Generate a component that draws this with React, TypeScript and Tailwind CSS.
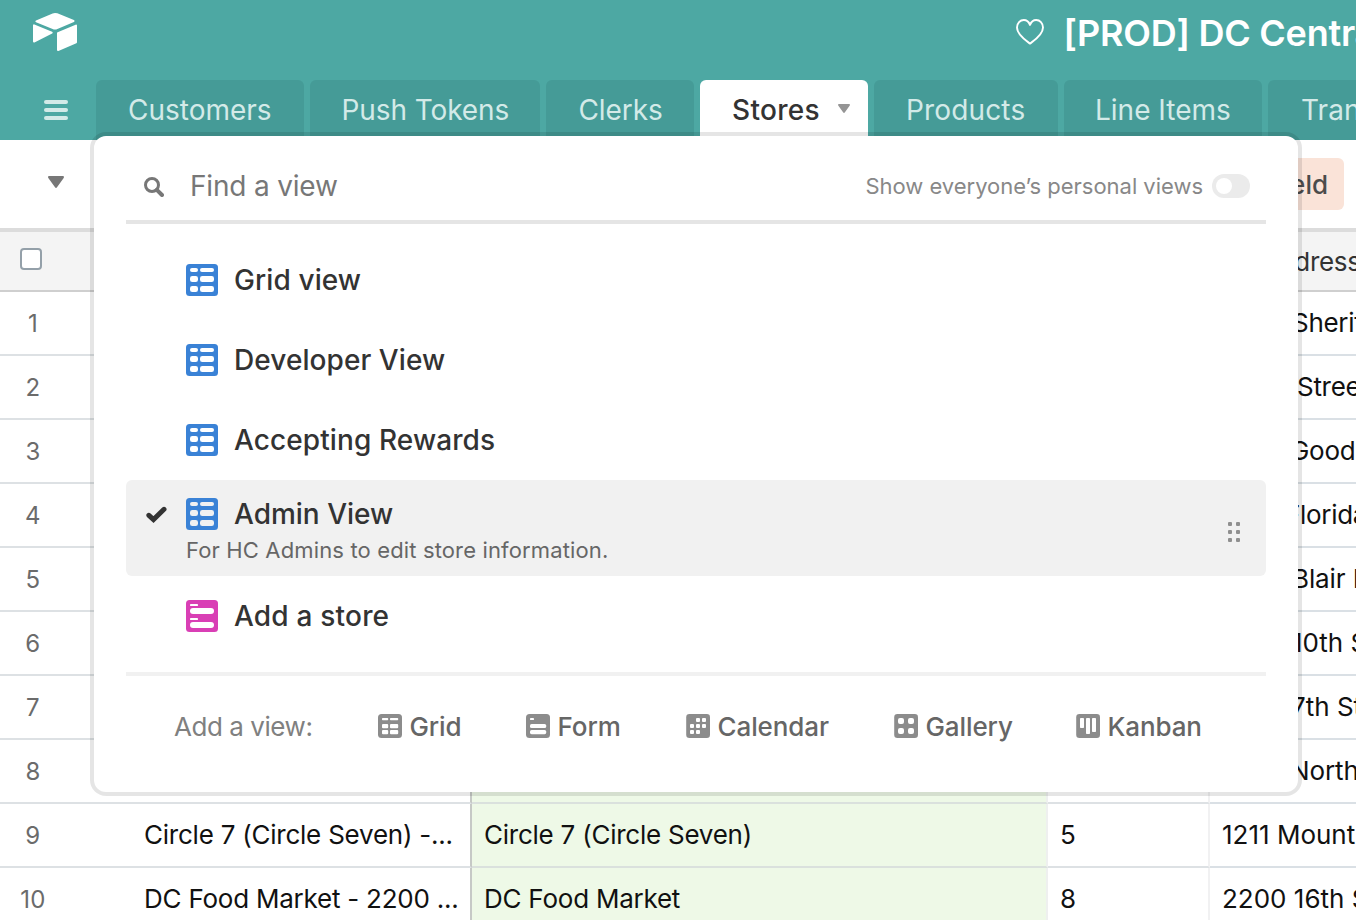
import React from "react";

type IconProps = { className?: string };

const GridIcon = ({ hole = "#fff" }: { hole?: string }) => (
  <svg width="32" height="32" viewBox="0 0 32 32" className="shrink-0">
    <rect width="32" height="32" rx="3.5" fill="#3a82d6" />
    <g fill={hole}>
      <rect x="4" y="4" width="8" height="4" rx="2" />
      <rect x="14" y="4" width="14" height="4" rx="2" />
      <rect x="4" y="12" width="8" height="6" rx="2.3" />
      <rect x="14" y="12" width="14" height="6" rx="2.3" />
      <rect x="4" y="22" width="8" height="6" rx="2.3" />
      <rect x="14" y="22" width="14" height="6" rx="2.3" />
    </g>
  </svg>
);

const FormIcon = () => (
  <svg width="32" height="32" viewBox="0 0 32 32" className="shrink-0">
    <rect width="32" height="32" rx="3.5" fill="#d93fb5" />
    <g fill="#fff">
      <rect x="4" y="4" width="8" height="2" rx="0.4" />
      <rect x="4" y="8" width="24" height="6" rx="3" />
      <rect x="4" y="18" width="8" height="2" rx="0.4" />
      <rect x="4" y="22" width="24" height="6" rx="3" />
    </g>
  </svg>
);

const SmallGrid = () => (
  <svg width="24" height="24" viewBox="0 0 24 24">
    <rect width="24" height="24" rx="3.5" fill="#8c8c8c" />
    <g fill="#fff">
      <rect x="4" y="4" width="6.2" height="2.2" rx="0.7" />
      <rect x="12" y="4" width="8.2" height="2.2" rx="0.7" />
      <rect x="4" y="10" width="6.2" height="4.2" rx="1" />
      <rect x="12" y="10" width="8.2" height="4.2" rx="1" />
      <rect x="4" y="16" width="6.2" height="4.2" rx="1" />
      <rect x="12" y="16" width="8.2" height="4.2" rx="1" />
    </g>
  </svg>
);

const SmallForm = () => (
  <svg width="24" height="24" viewBox="0 0 24 24">
    <rect width="24" height="24" rx="3.5" fill="#8c8c8c" />
    <g fill="#fff">
      <rect x="4" y="4" width="4" height="2" rx="0.4" />
      <rect x="4" y="10" width="16.2" height="4" rx="1.6" />
      <rect x="4" y="16" width="16.2" height="4.2" rx="1.6" />
    </g>
  </svg>
);

const SmallCalendar = () => (
  <svg width="24" height="24" viewBox="0 0 24 24">
    <rect x="0.2" width="23.8" height="24" rx="3.2" fill="#8c8c8c" />
    <g fill="#fff">
      <rect x="10" y="4" width="4" height="4" rx="1" />
      <rect x="16" y="4" width="4" height="4" rx="1" />
      <rect x="4" y="10" width="4" height="4" rx="1" />
      <rect x="10" y="10" width="4" height="4" rx="1" />
      <rect x="16" y="10" width="4" height="4" rx="1" />
      <rect x="4" y="16" width="4" height="4" rx="1" />
      <rect x="10" y="16" width="4" height="4" rx="1" />
    </g>
  </svg>
);

const SmallGallery = () => (
  <svg width="24" height="24" viewBox="0 0 24 24">
    <rect x="0.2" width="23.8" height="24" rx="3.2" fill="#8c8c8c" />
    <g fill="#fff">
      <rect x="4" y="4" width="6" height="6" rx="2" />
      <rect x="14" y="4" width="6" height="6" rx="2" />
      <rect x="4" y="14" width="6" height="6" rx="2" />
      <rect x="14" y="14" width="6" height="6" rx="2" />
    </g>
  </svg>
);

const SmallKanban = () => (
  <svg width="24" height="24" viewBox="0 0 24 24">
    <rect x="0.2" width="23.8" height="24" rx="3.2" fill="#8c8c8c" />
    <g fill="#fff">
      <rect x="4" y="4" width="4" height="10" rx="0.8" />
      <rect x="10" y="4" width="4" height="16" rx="0.8" />
      <rect x="16" y="4" width="4" height="14" rx="0.8" />
    </g>
  </svg>
);

const Caret = ({ className }: IconProps) => (
  <svg viewBox="0 0 16 12" className={className} fill="currentColor">
    <path d="M1.2 0h13.6c1 0 1.5 1 .9 1.9L9 11.3c-.5.8-1.5.8-2 0L.3 1.9C-.3 1 .2 0 1.2 0z" />
  </svg>
);

const tabs = [
  { name: "Customers", box: "w-[208px]", text: "tracking-[0px]" },
  { name: "Push Tokens", box: "w-[230px]", text: "ml-[-0.5px] tracking-[-0.1px]" },
  { name: "Clerks", box: "w-[148px]", text: "ml-[0.5px] tracking-[-0.1px]" },
  { name: "Stores", box: "w-[168px]", text: "tracking-[0.3px]", active: true },
  { name: "Products", box: "w-[184px]", text: "tracking-[0.15px]" },
  { name: "Line Items", box: "w-[198px]", text: "ml-[-1px] tracking-[0px]" },
  { name: "Transactions", box: "w-[230px]", text: "ml-[1px] tracking-[0.1px]" },
];

const rows = [
  { name: "", store: "", count: "", address: "Sheriff", pad: "pl-[82px] tracking-[-0.3px]" },
  { name: "", store: "", count: "", address: "Street", pad: "pl-[87px] tracking-[-0.3px]" },
  { name: "", store: "", count: "", address: "Good", pad: "pl-[80px] tracking-[-0.3px]" },
  { name: "", store: "", count: "", address: "Florida", pad: "pl-[75px] tracking-[-0.3px]" },
  { name: "", store: "", count: "", address: "Blair Rd", pad: "pl-[82px] tracking-[-0.1px]" },
  { name: "", store: "", count: "", address: "10th St", pad: "pl-[82px]" },
  { name: "", store: "", count: "", address: "7th St", pad: "pl-[81px]" },
  { name: "", store: "", count: "", address: "North", pad: "pl-[80px] tracking-[-0.1px]" },
  { name: "Circle 7 (Circle Seven) -...", store: "Circle 7 (Circle Seven)", count: "5", address: "1211 Mount", pad: "pl-3" },
  { name: "DC Food Market - 2200 ...", store: "DC Food Market", count: "8", address: "2200 16th St", pad: "pl-3" },
];

const views = [
  { name: "Grid view", text: "tracking-[0.1px]" },
  { name: "Developer View", text: "tracking-[0.07px]" },
  { name: "Accepting Rewards", text: "tracking-[0.1px]" },
];

const viewTypes = [
  { name: "Grid", Icon: SmallGrid, box: "w-[148px]" },
  { name: "Form", Icon: SmallForm, box: "w-[160px]" },
  { name: "Calendar", Icon: SmallCalendar, box: "w-[208px]" },
  { name: "Gallery", Icon: SmallGallery, box: "w-[182px]" },
  { name: "Kanban", Icon: SmallKanban, box: "w-[160px]" },
];

function Header() {
  return (
    <header className="flex h-[140px] flex-col bg-[#4da8a3]">
      <div className="flex h-20 items-start justify-between pl-8">
        <svg width="46" height="40" viewBox="0 0 46 40" className="mt-3" fill="#fff" stroke="#fff" strokeWidth="2" strokeLinejoin="round">
          <path d="M4.4 9.3 21 2.3Q23 1.5 25 2.3L41.5 9 25 16Q23 16.9 21 16z" />
          <path d="M2 13.3V29.5L19.7 20.6z" />
          <path d="M26 21.2V38L44 30.3V13.6z" />
        </svg>
        <div className="flex w-[340px] items-center overflow-hidden pt-[9px] whitespace-nowrap">
          <svg width="28" height="26" viewBox="0 0 28 26" className="mr-[19.5px] -mt-0.5 shrink-0" fill="none" stroke="#fff" strokeWidth="1.9" strokeLinejoin="round">
            <path d="M14 24.6C10 21.8 1 16 1 8.6 1 4 4.2 1 7.8 1 10.8 1 12.9 3 14 5.9 15.1 3 17.2 1 20.2 1 23.8 1 27 4 27 8.6 27 16 18 21.8 14 24.6z" />
          </svg>
          <h1 className="text-[36px] leading-[48px] font-semibold tracking-[-0.25px] text-white">[PROD] DC Central</h1>
        </div>
      </div>
      <nav className="flex h-[60px] overflow-hidden">
        <div className="flex w-24 shrink-0 items-center pl-11">
          <div className="flex flex-col gap-1">
            <span className="h-1 w-6 rounded-full bg-[#d3eae8]" />
            <span className="h-1 w-6 rounded-full bg-[#d3eae8]" />
            <span className="h-1 w-6 rounded-full bg-[#d3eae8]" />
          </div>
        </div>
        <div className="flex gap-1.5">
          {tabs.map((t) => (
            <div
              key={t.name}
              className={`flex shrink-0 items-center rounded-t-md pl-8 ${t.box} ${t.active ? "bg-white font-medium text-[#333]" : "bg-[#459b97] text-[#d3eae8]"}`}
            >
              <span className={`text-[28px] whitespace-nowrap ${t.text}`}>{t.name}</span>
              {t.active && <Caret className="mt-[-3px] ml-[18px] h-[9px] w-3 text-[#959595]" />}
            </div>
          ))}
        </div>
      </nav>
    </header>
  );
}

function Table() {
  return (
    <main className="text-[26px] text-[#111]">
      <div className="flex h-[88px] items-start justify-between">
        <Caret className="mt-9 ml-12 h-3 w-4 text-[#777]" />
        <div className="mt-[18px] mr-3 flex h-[52px] w-[120px] items-center justify-end rounded-md bg-[#fae3d8] pr-4 font-medium text-[#4b4b4b]">
          1 field
        </div>
      </div>
      <div className="flex h-16 items-center overflow-hidden border-t-4 border-b-2 border-t-[#dcdcdc] border-b-[#cfcfcf] bg-[#f4f4f4]">
        <div className="mt-[-4px] ml-5 h-[22px] w-[22px] shrink-0 rounded border-2 border-[#94a0a9] bg-white" />
        <span className="ml-[1219px] whitespace-nowrap tracking-[-0.3px] text-[#333]">Address</span>
      </div>
      {rows.map((r, i) => (
        <div key={i} className="flex h-16 whitespace-nowrap">
          <div className="flex w-[66px] shrink-0 items-center justify-center border-b-2 border-[#dde1e4] pt-0.5 text-[24px] tracking-[0.4px] text-[#6b6b6b]">
            {i + 1}
          </div>
          <div className="flex w-[406px] shrink-0 items-center border-r-2 border-b-2 border-r-[#c6c9c6] border-b-[#dde1e4] pb-0.5 pl-[78px] tracking-[-0.23px]">
            {r.name}
          </div>
          <div className="flex w-[576px] shrink-0 items-center border-r-2 border-b-2 border-r-[#eef0ef] border-b-[#dae1dd] bg-[#eef9e7] pb-0.5 pl-3 tracking-[-0.24px]">
            {r.store}
          </div>
          <div className="flex w-[162px] shrink-0 items-center border-r-2 border-b-2 border-r-[#f1f1f2] border-b-[#dde1e4] pb-0.5 pl-3">
            {r.count}
          </div>
          <div className={`flex w-[146px] shrink-0 items-center overflow-hidden border-b-2 border-[#dae0e5] pb-0.5 ${r.pad}`}>
            {r.address}
          </div>
        </div>
      ))}
    </main>
  );
}

function ViewMenu() {
  return (
    <section className="absolute top-[136px] left-[94px] h-[656px] w-[1204px] rounded-xl bg-white px-8 shadow-[0_0_0_4px_rgba(0,0,0,0.1)]">
      <div className="flex h-[88px] items-center border-b-4 border-[#e5e5e5] pt-4 pr-4 pl-[18px]">
        <svg width="20" height="20" viewBox="0 0 20 20" className="mt-0.5" fill="none" stroke="#777">
          <circle cx="8" cy="8" r="6.5" strokeWidth="3" />
          <path d="M12.8 12.8 18 18" strokeWidth="4" strokeLinecap="round" />
        </svg>
        <span className="ml-[26px] text-[28px] tracking-[-0.18px] text-[#777]">Find a view</span>
        <span className="ml-auto text-[22px] tracking-[-0.02px] text-[#888]">Show everyone’s personal views</span>
        <span className="ml-[9px] flex h-6 w-[38px] items-center rounded-full bg-[#ebebeb] pl-1">
          <span className="h-4 w-4 rounded-full bg-white" />
        </span>
      </div>
      <div className="pt-4 text-[28px] font-medium text-[#333]">
        {views.map((v) => (
          <div key={v.name} className="flex h-20 items-center gap-4 pl-[60px]">
            <GridIcon />
            <span className={v.text}>{v.name}</span>
          </div>
        ))}
        <div className="flex h-24 items-center justify-between rounded-md bg-[#f1f1f1] pr-[26px] pl-5">
          <div className="flex flex-col pt-2">
            <div className="flex h-8 items-center">
              <svg width="21" height="17" viewBox="0 0 21 17" className="mr-[19px] mt-px" fill="none" stroke="#333" strokeWidth="5" strokeLinecap="round">
                <path d="M2.9 9.3 7.5 13.5 18 3.3" strokeLinejoin="miter" />
              </svg>
              <GridIcon hole="#f1f1f1" />
              <span className="ml-4">Admin View</span>
            </div>
            <span className="mt-1 ml-10 text-[22px] leading-8 font-normal tracking-[0.14px] text-[#666]">
              For HC Admins to edit store information.
            </span>
          </div>
          <div className="mt-2 grid grid-cols-2 gap-1">
            {[0, 1, 2, 3, 4, 5].map((d) => (
              <span key={d} className="h-1 w-1 rounded-[1px] bg-[#8f8f8f]" />
            ))}
          </div>
        </div>
        <div className="flex h-20 items-center gap-4 pl-[60px]">
          <FormIcon />
          <span className="tracking-[0.2px]">Add a store</span>
        </div>
      </div>
      <div className="mt-4 flex h-[104px] items-center border-t-4 border-[#f1f1f1] pl-12 text-[26px]">
        <span className="w-[204px] tracking-[-0.45px] text-[#808080]">Add a view:</span>
        {viewTypes.map(({ name, Icon, box }) => (
          <div key={name} className={`flex items-center gap-[7.5px] font-medium tracking-[-0.1px] text-[#666] ${box}`}>
            <Icon />
            <span>{name}</span>
          </div>
        ))}
      </div>
    </section>
  );
}

export default function App() {
  return (
    <div className="relative h-[920px] w-[1356px] overflow-hidden bg-white font-['Inter','Liberation_Sans',sans-serif]">
      <Header />
      <Table />
      <ViewMenu />
    </div>
  );
}
